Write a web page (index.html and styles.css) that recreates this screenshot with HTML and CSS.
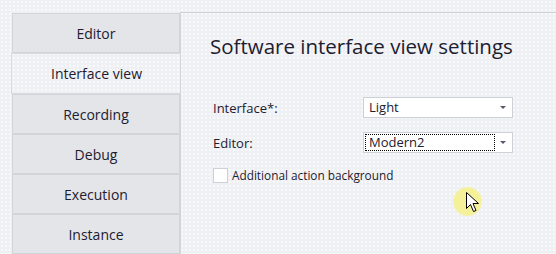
FILE: index.html
```html
<!DOCTYPE html>
<html lang="en">
<head>
    <title>Interface view settings</title>
    <meta charset="utf-8">
    <meta name="viewport" content="width=device-width, initial-scale=1">
    <link rel="stylesheet" href="styles.css">
</head>
<body>
<div class="window">
    <nav class="tabs">
        <div class="tab">Editor</div>
        <div class="tab tab-active">Interface view</div>
        <div class="tab">Recording</div>
        <div class="tab">Debug</div>
        <div class="tab">Execution</div>
        <div class="tab">Instance</div>
    </nav>
    <section class="panel">
        <h1 class="panel-title">Software interface view settings</h1>
        <div class="row">
            <span class="row-label">Interface*:</span>
            <div class="combo">
                <span class="combo-value">Light</span>
                <span class="combo-arrow"></span>
            </div>
        </div>
        <div class="row">
            <span class="row-label">Editor:</span>
            <div class="combo">
                <span class="combo-value combo-focused">Modern2</span>
                <span class="combo-arrow"></span>
            </div>
        </div>
        <label class="check">
            <span class="check-box"></span>
            <span class="check-title">Additional action background</span>
        </label>
    </section>
</div>
<div class="cursor">
    <svg width="14" height="22" viewBox="0 0 14 22">
        <path d="M0.5 0.5 L0.5 16.5 L4.5 12.5 L7.5 19.5 L10 18.5 L7 11.5 L12.5 11.5 Z" fill="#ffffff" stroke="#000000" stroke-width="1"/>
    </svg>
</div>
</body>
</html>
```

FILE: styles.css
```css
*, *::before, *::after {
    margin: 0;
    padding: 0;
    box-sizing: border-box;
}

body {
    height: 254px;
    overflow: hidden;
    background-color: #eff0f4;
    background-image: radial-gradient(circle, rgba(255, 255, 255, 0.9) 0.6px, transparent 0.9px);
    background-size: 4px 4px;
    color: #1c2030;
    font-family: "Open Sans", "Noto Sans", sans-serif;
    font-size: 13px;
}

.window {
    display: flex;
    padding-top: 12px;
    padding-left: 12px;
}

.tabs {
    display: flex;
    flex-direction: column;
    width: 168px;
    padding-top: 1px;
}

.tab {
    height: 40px;
    display: flex;
    align-items: center;
    justify-content: center;
    border: 1px solid #d2d4da;
    background-color: #e4e5e9;
    font-size: 14px;
    color: #1c2030;
}

.tab-active {
    height: 41px;
    margin-left: -1px;
    margin-right: -1px;
    border-right: none;
    border-color: #d8dadf;
    background-color: transparent;
    position: relative;
    z-index: 1;
}

.panel {
    flex: 1;
    height: 242px;
    border-top: 1px solid #cfd1d7;
    border-left: 1px solid #d2d4da;
    padding: 20px 0 0 29px;
}

.panel-title {
    font-size: 20.5px;
    font-weight: 400;
    line-height: 27px;
    color: #1c2030;
    margin-bottom: 37px;
}

.row {
    display: flex;
    align-items: center;
    height: 21px;
    margin-bottom: 14px;
    padding-left: 3px;
}

.row-label {
    width: 150px;
    font-size: 13px;
}

.combo {
    display: flex;
    align-items: center;
    width: 150px;
    height: 21px;
    border: 1px solid #cdd0d6;
    background-color: #ffffff;
    padding: 1px;
}

.combo-value {
    flex: 1;
    height: 17px;
    line-height: 15px;
    padding-left: 3px;
    border: 1px dotted transparent;
    font-size: 13px;
}

.combo-focused {
    border-color: #000000;
}

.combo-arrow {
    width: 16px;
    height: 17px;
    position: relative;
}

.combo-arrow::after {
    content: "";
    position: absolute;
    left: 5px;
    top: 7px;
    border-left: 3px solid transparent;
    border-right: 3px solid transparent;
    border-top: 3px solid #555a66;
}

.check {
    display: flex;
    align-items: center;
    padding-left: 3px;
    margin-top: 1px;
}

.check-box {
    width: 15px;
    height: 15px;
    border: 1px solid #cdd0d6;
    background-color: #ffffff;
    margin-right: 4px;
}

.check-title {
    font-size: 11.8px;
}

.cursor {
    position: absolute;
    left: 453px;
    top: 187px;
    width: 29px;
    height: 29px;
    border-radius: 50%;
    background: radial-gradient(circle, #f5f19a 60%, rgba(245, 241, 154, 0.6) 85%, rgba(245, 241, 154, 0) 100%);
}

.cursor svg {
    position: absolute;
    left: 13px;
    top: 5px;
}
```
